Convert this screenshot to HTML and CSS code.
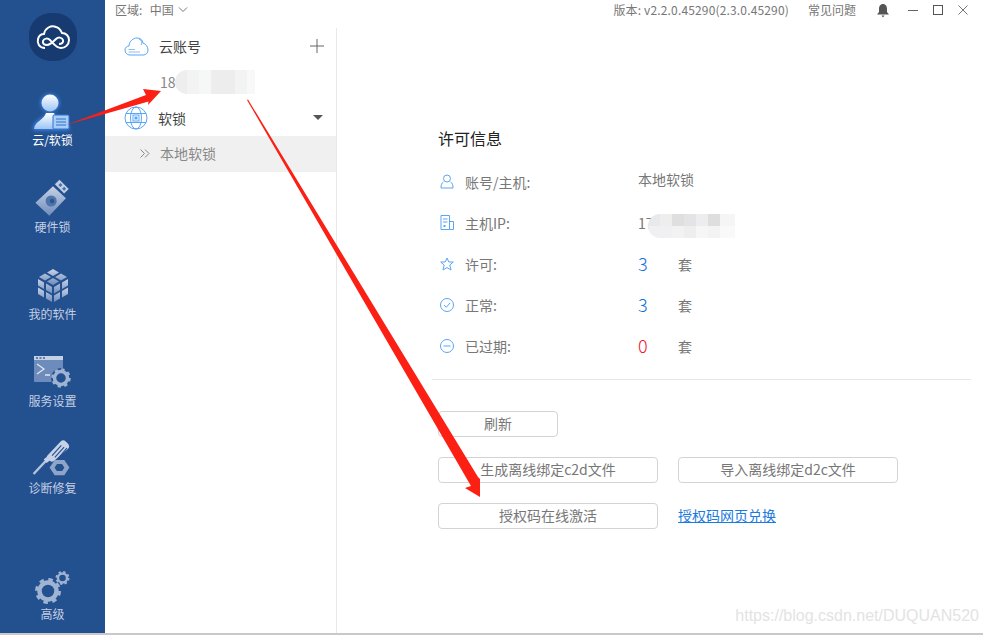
FILE: index.html
```html
<!DOCTYPE html>
<html lang="zh-CN">
<head>
<meta charset="utf-8">
<title>许可信息</title>
<link rel="stylesheet" href="styles.css">
</head>
<body>
<div class="app">
  <nav class="rail">
    <div class="logo">
      <svg width="34" height="28" viewBox="0 0 34 28" fill="none" stroke="#fff" stroke-width="2"><path d="M9 25C3 25 1 20 2 16C3 12 6 11 8 11C9 5 15 2 20 4C24 5 25 8 26 10C30 10 33 13 33 17C33 22 29 25 25 25C20 25 17 20 14 17C12 15 8 15 7 18C6 21 9 22 11 22C14 22 17 19 20 16C22 14 26 14 27 17C28 20 25 21 23 21"/></svg>
    </div>
    <a class="nav-item active">
      <svg class="nav-icon" width="54" height="50" viewBox="0 0 54 50">
        <defs>
          <linearGradient id="user" x1="0" y1="0" x2="0" y2="1"><stop offset="0" stop-color="#fff"/><stop offset="1" stop-color="#9cc4f5"/></linearGradient>
          <filter id="glow" x="-30%" y="-30%" width="160%" height="160%"><feGaussianBlur stdDeviation="2"/></filter>
        </defs>
        <g fill="#3f8cf2" filter="url(#glow)"><circle cx="24" cy="14" r="9"/><path d="M7 41C8 31 17 30 20 26H28C31 30 41 31 44 41Z"/></g>
        <circle cx="24" cy="14" r="8.500" fill="url(#user)"/>
        <path d="M8 40C9 32 18 31 20 24H28C30 30 36 31 38 34V40Z" fill="url(#user)"/>
        <rect x="27" y="26" width="16" height="14" rx="1" fill="#a9cdf6" stroke="#2d75cf"/>
        <path d="M30 30H40M30 33H40M30 36H40" stroke="#2f74c9" stroke-width="1.200"/>
      </svg>
      <span>云/软锁</span>
    </a>
    <a class="nav-item">
      <svg class="nav-icon" width="54" height="50" viewBox="0 -2 58 54">
        <defs><linearGradient id="dim" x1="0" y1="0" x2="0" y2="1"><stop offset="0" stop-color="#c7d2e6"/><stop offset="1" stop-color="#6f8dbd"/></linearGradient></defs>
        <path d="M10 27L29 9L43 22L25 41Z" fill="url(#dim)"/>
        <path d="M31 7L36 2L46 12L41 17Z" fill="#c0cde2"/>
        <rect x="36" y="6" width="3" height="3" fill="#496fa8" transform="rotate(45 37 7)"/><rect x="40" y="10" width="3" height="3" fill="#496fa8" transform="rotate(45 41 11)"/>
        <circle cx="27" cy="25" r="6" fill="#4e74ab"/><circle cx="28" cy="25" r="2.400" fill="#2c5693"/>
      </svg>
      <span>硬件锁</span>
    </a>
    <a class="nav-item">
      <svg class="nav-icon" width="54" height="50" viewBox="0 0 54 50" fill="url(#dim)">
        <path d="M27 6L33 9.500L27 13L21 9.500ZM19 10.500L25 14L19 17.500L13 14ZM35 10.500L41 14L35 17.500L29 14ZM27 15L33 18.500L27 22L21 18.500Z"/>
        <path d="M12 16L18 19.500V26L12 22.500ZM20 20.500L26 24V30.500L20 27ZM42 16V22.500L36 26V19.500ZM34 20.500V27L28 30.500V24Z"/>
        <path d="M12 24.500L18 28V34.500L12 31ZM20 29L26 32.500V39L20 35.500ZM42 24.500V31L36 34.500V28ZM34 29V35.500L28 39V32.500Z"/>
      </svg>
      <span>我的软件</span>
    </a>
    <a class="nav-item">
      <svg class="nav-icon" width="54" height="50" viewBox="0 0 54 50">
        <rect x="8" y="6" width="29" height="26" rx="1" fill="#6d8cbb"/>
        <rect x="8" y="6" width="29" height="4" fill="#c4d0e4"/>
        <path d="M10 8H12M13.500 8H15.500M17 8H19" stroke="#3d659f" stroke-width="1.500"/>
        <path d="M11 14L18 19L11 24M19 25H24" stroke="#dfe6f2" stroke-width="1.300" fill="none"/>
        <circle cx="35" cy="28" r="10" fill="#23508f"/>
        <circle cx="35" cy="28" r="6.500" fill="none" stroke="#9fb3d3" stroke-width="3.500"/>
        <circle cx="35" cy="28" r="8.500" fill="none" stroke="#9fb3d3" stroke-width="2.500" stroke-dasharray="3.300 3.370"/>
      </svg>
      <span>服务设置</span>
    </a>
    <a class="nav-item">
      <svg class="nav-icon" width="54" height="50" viewBox="0 0 58 54">
        <path d="M8 40L22 25" stroke="#b5c4dc" stroke-width="2.500"/>
        <path d="M19 24L22 28L26 25L23 21Z" fill="#c7d2e6"/>
        <path d="M23 20L37 5C39 3 41 3 43 5L45 7C47 9 47 11 45 13L30 26C28 27 27 27 26 26L23 23C22 22 22 21 23 20Z" fill="#c7d2e6"/>
        <path d="M28 20L38 9M31 22L41 11M34 24L44 12" stroke="#23508f" stroke-width="1.200"/>
        <path d="M28 33L32 27H40L44 33L40 39H32Z" fill="none" stroke="#8ea5c9" stroke-width="4.500"/>
      </svg>
      <span>诊断修复</span>
    </a>
    <a class="nav-item advanced">
      <svg class="nav-icon" width="54" height="46" viewBox="0 0 54 46">
        <circle cx="22" cy="25" r="8.500" fill="none" stroke="#9fb3d3" stroke-width="4.500"/>
        <circle cx="22" cy="25" r="11.500" fill="none" stroke="#9fb3d3" stroke-width="3" stroke-dasharray="4.510 4.520"/>
        <circle cx="36.500" cy="12" r="4.500" fill="none" stroke="#9fb3d3" stroke-width="2.400"/>
        <circle cx="36.500" cy="12" r="6" fill="none" stroke="#9fb3d3" stroke-width="2" stroke-dasharray="2.350 2.360"/>
      </svg>
      <span>高级</span>
    </a>
  </nav>

  <div class="main">
    <header class="topbar">
      <div class="region">区域:&nbsp; 中国
        <svg width="10" height="6" viewBox="0 0 10 6" fill="none" stroke="#777"><path d="M1 .5L5 4.500L9 .5"/></svg>
      </div>
      <div class="topbar-right">
        <span class="version">版本: v2.2.0.45290(2.3.0.45290)</span>
        <span class="faq">常见问题</span>
        <svg class="bell" width="14" height="15" viewBox="0 0 14 15" fill="#555"><path d="M7 1C9.800 1 11 3.500 11 6V9L13 11.500H1L3 9V6C3 3.500 4.200 1 7 1Z"/><path d="M5.500 12.500H8.500L7 14.500Z"/></svg>
        <div class="window-btns">
          <svg width="10" height="10" viewBox="0 0 10 10" stroke="#666"><path d="M0 5.500H10"/></svg>
          <svg width="10" height="10" viewBox="0 0 10 10" stroke="#555" fill="none"><rect x=".5" y=".5" width="9" height="9"/></svg>
          <svg width="10" height="10" viewBox="0 0 10 10" stroke="#777"><path d="M.5 .5L9.500 9.500M9.500 .5L.5 9.500"/></svg>
        </div>
      </div>
    </header>

    <div class="body">
      <aside class="tree">
        <div class="tree-head cloud">
          <svg width="25" height="19" viewBox="0 0 25 19" fill="none" stroke="#5aa5f5"><path d="M6 18C3 18 1 16 1 13C1 10.500 3 9 5 9C5.500 4 9 1 13 1C16.500 1 18.500 3 19 6C22 7 24 10 24 13C24 16 22 18 19 18Z"/><path d="M4.500 12.500H11M4.500 15H16" stroke="#8cc0f7"/><path d="M15 2C18 3 18.500 6 17 8"/></svg>
          <span class="tree-title">云账号</span>
          <svg class="tree-action" width="14" height="14" viewBox="0 0 14 14" stroke="#666"><path d="M7 0V14M0 7H14"/></svg>
        </div>
        <div class="account">18</div>
        <div class="tree-head lock">
          <svg width="24" height="24" viewBox="0 0 24 24" fill="none" stroke="#5aa5f5"><circle cx="12" cy="12" r="11"/><ellipse cx="12" cy="12" rx="5.500" ry="11"/><path d="M2 7.500H22M2 16.500H22"/><rect x="9" y="9" width="6" height="6" fill="#fff"/><rect x="10.500" y="10.500" width="3" height="3" fill="#5aa5f5" stroke="none"/></svg>
          <span class="tree-title">软锁</span>
          <span class="caret"></span>
        </div>
        <div class="tree-row">
          <svg width="10" height="9" viewBox="0 0 10 9" fill="none" stroke="#888"><path d="M.5 .5L4.500 4.500L.5 8.500M5 .5L9 4.500L5 8.500"/></svg>
          <span>本地软锁</span>
        </div>
      </aside>

      <section class="content">
        <h1 class="content-title">许可信息</h1>
        <div class="info">
          <div class="info-row">
            <svg class="info-icon" width="14" height="15" viewBox="0 0 14 15" fill="none" stroke="#5aa5f5"><circle cx="7" cy="4.500" r="3.500"/><path d="M3.500 8C1.500 9 1 11 1 14H13C13 11 12.500 9 10.500 8"/></svg>
            <span class="info-label">账号/主机:</span><span class="info-value top">本地软锁</span>
          </div>
          <div class="info-row">
            <svg class="info-icon" width="14" height="15" viewBox="0 0 14 15" fill="none" stroke="#5aa5f5"><path d="M9.500 14.500H1V.5H9.500ZM9.500 6.500H13.500V14.500H9.500M3 4H7.500M3 7H7.500"/><rect x="3.500" y="10" width="2" height="2" fill="#5aa5f5" stroke="none"/></svg>
            <span class="info-label">主机IP:</span><span class="info-value">17</span>
          </div>
          <div class="info-row">
            <svg class="info-icon" width="14" height="14" viewBox="0 0 14 14" fill="none" stroke="#5aa5f5"><path d="M7 1L8.800 5H13.300L9.800 8L11 13L7 10.500L3 13L4.200 8L.7 5H5.200Z"/></svg>
            <span class="info-label">许可:</span><span class="info-value count">3</span><span class="unit">套</span>
          </div>
          <div class="info-row">
            <svg class="info-icon" width="14" height="14" viewBox="0 0 14 14" fill="none" stroke="#5aa5f5"><circle cx="7" cy="7" r="6.500"/><path d="M4 7L6.300 9.300L10 5"/></svg>
            <span class="info-label">正常:</span><span class="info-value count">3</span><span class="unit">套</span>
          </div>
          <div class="info-row">
            <svg class="info-icon" width="14" height="14" viewBox="0 0 14 14" fill="none" stroke="#5aa5f5"><circle cx="7" cy="7" r="6.500"/><path d="M3.500 7H10.500"/></svg>
            <span class="info-label">已过期:</span><span class="info-value count expired">0</span><span class="unit">套</span>
          </div>
        </div>
        <div class="divider"></div>
        <div class="actions">
          <div class="action-row"><button class="btn small">刷新</button></div>
          <div class="action-row"><button class="btn">生成离线绑定c2d文件</button><button class="btn">导入离线绑定d2c文件</button></div>
          <div class="action-row"><button class="btn">授权码在线激活</button><a class="link">授权码网页兑换</a></div>
        </div>
      </section>
    </div>
  </div>
</div>

<div class="mosaic mosaic-account"></div>
<div class="mosaic mosaic-ip"></div>
<svg class="arrows" width="983" height="635" viewBox="0 0 983 635" fill="#fb1f14">
  <path d="M66 125L146 95L143 89L161 91L148 105L148.500 101.500Z"/>
  <path d="M247 100L248 99.500L478 477L480 479L480 497L465 488L471 486Z"/>
</svg>
<div class="watermark">https://blog.csdn.net/DUQUAN520</div>
</body>
</html>
```
FILE: styles.css
```css
* { box-sizing: border-box; }
html, body { margin: 0; height: 635px; overflow: hidden; background: #fff; }
body {
  position: relative;
  font-family: "Noto Sans CJK SC", "Open Sans", sans-serif;
  color: #666;
  font-size: 14px;
}
svg { display: block; flex: none; }

.app { display: flex; height: 635px; border-bottom: 2px solid #c9c9c9; }

.rail {
  width: 105px;
  flex: none;
  background: #23508f;
  display: flex;
  flex-direction: column;
  align-items: center;
  padding-top: 13px;
}
.logo {
  width: 48px;
  height: 48px;
  border-radius: 22px;
  background: #173a70;
  display: flex;
  align-items: center;
  justify-content: center;
  margin-bottom: 23px;
}
.nav-item {
  height: 87px;
  width: 100%;
  flex: none;
  display: flex;
  flex-direction: column;
  align-items: center;
  color: #c3cfe3;
  font-size: 12px;
  line-height: 18px;
}
.nav-item .nav-icon { margin-top: 5px; margin-bottom: -8px; }
.nav-item.active { color: #fff; }
.nav-item.advanced { margin-top: auto; height: 66px; margin-bottom: 10px; }
.nav-item.advanced .nav-icon { margin-top: 9px; margin-bottom: -7px; }

.main { flex: 1; min-width: 0; display: flex; flex-direction: column; }

.topbar {
  height: 28px;
  flex: none;
  display: flex;
  justify-content: space-between;
  align-items: flex-start;
  font-size: 12px;
  padding: 1px 0 0 10px;
  line-height: 18px;
  color: #777;
}
.region { display: flex; align-items: center; gap: 4px; word-spacing: 1px; }
.topbar-right { display: flex; align-items: center; height: 18px; }
.version { letter-spacing: .16px; }
.faq { margin-left: 19px; }
.bell { margin-left: 20px; }
.window-btns { display: flex; gap: 15px; margin: 0 15px 0 18px; width: 60px; }

.body { flex: 1; display: flex; min-height: 0; }

.tree { width: 232px; flex: none; border-right: 1px solid #e8e8e8; }
.tree-head {
  height: 38px;
  display: flex;
  align-items: center;
  padding-left: 19px;
  color: #444;
}
.tree-head.cloud { margin-top: -1px; }
.tree-title { margin-left: 10px; line-height: 20px; }
.tree-action { margin-left: auto; margin-right: 12px; }
.account { height: 34px; padding-left: 55px; line-height: 34px; color: #888; }
.lock { height: 37px; }
.caret {
  margin-left: auto;
  margin-right: 13px;
  border: 5px solid transparent;
  border-top: 5px solid #555;
  border-bottom: 0;
}
.tree-row {
  height: 36px;
  background: #f0f0f0;
  display: flex;
  align-items: center;
  padding: 0 0 2px 35px;
  color: #888;
  gap: 10px;
}

.content { flex: 1; min-width: 0; padding: 0 12px 0 101px; }
.content-title {
  margin: 99px 0 0;
  font-size: 16px;
  font-weight: 400;
  line-height: 22px;
  color: #222;
}
.info { margin-top: 12px; }
.info-row {
  height: 41px;
  display: flex;
  align-items: center;
}
.info-icon { margin-left: 2px; width: 14px; }
.info-label { margin-left: 11px; width: 173px; color: #777; }
.info-value { width: 40px; color: #777; }
.info-value.top { margin-top: -5px; white-space: nowrap; }
.info-value.count { font-size: 18px; font-weight: 300; color: #0f70dd; margin-top: -2px; }
.info-value.expired { color: #f5142d; }
.unit { color: #777; font-size: 14px; }

.divider { height: 1px; background: #e8e8e8; margin: 13px 0 0 -6px; }

.actions { display: flex; flex-direction: column; gap: 20px; margin-top: 31px; }
.action-row { display: flex; align-items: center; gap: 20px; height: 26px; }
.btn {
  width: 220px;
  height: 26px;
  padding: 0 0 2px;
  background: #fff;
  border: 1px solid #d3d3d3;
  border-radius: 4px;
  font: inherit;
  font-size: 14px;
  line-height: 22px;
  color: #777;
}
.btn.small { width: 120px; }
.link { color: #1a7ae0; text-decoration: underline; font-size: 14px; margin-top: -2px; }

.mosaic { position: absolute; height: 24px; border-radius: 12px 0 0 12px; }
.mosaic-account {
  left: 175px;
  top: 70px;
  width: 80px;
  background:
    linear-gradient(90deg, #eee 0 12px, #f3f3f3 12px 24px, #f6f7f7 24px 36px, #ededed 36px 60px, #f2f3f3 60px 72px, #f8f8f8 72px);
}
.mosaic-ip {
  left: 648px;
  top: 214px;
  width: 87px;
  background:
    linear-gradient(90deg, #e8e9ec 0 12px, #eeeeee 12px 24px, #dfdfdf 24px 36px, #e4e4e6 36px 48px, #ededf0 48px 60px, #dedede 60px 72px, #f5f5f5 72px) top / 100% 12px no-repeat,
    linear-gradient(90deg, #f0f0f2 0 24px, #f2f2f2 24px 36px, #eeeeee 36px 48px, #f6f6f6 48px 60px, #f3f3f3 60px 72px, #f9f9f9 72px) bottom / 100% 12px no-repeat;
}
.arrows { position: absolute; left: 0; top: 0; pointer-events: none; }
.watermark {
  position: absolute;
  right: 4px;
  top: 606px;
  font-family: "Liberation Sans", sans-serif;
  font-size: 16px;
  line-height: 20px;
  color: #e3e3e3;
  white-space: nowrap;
}
```
